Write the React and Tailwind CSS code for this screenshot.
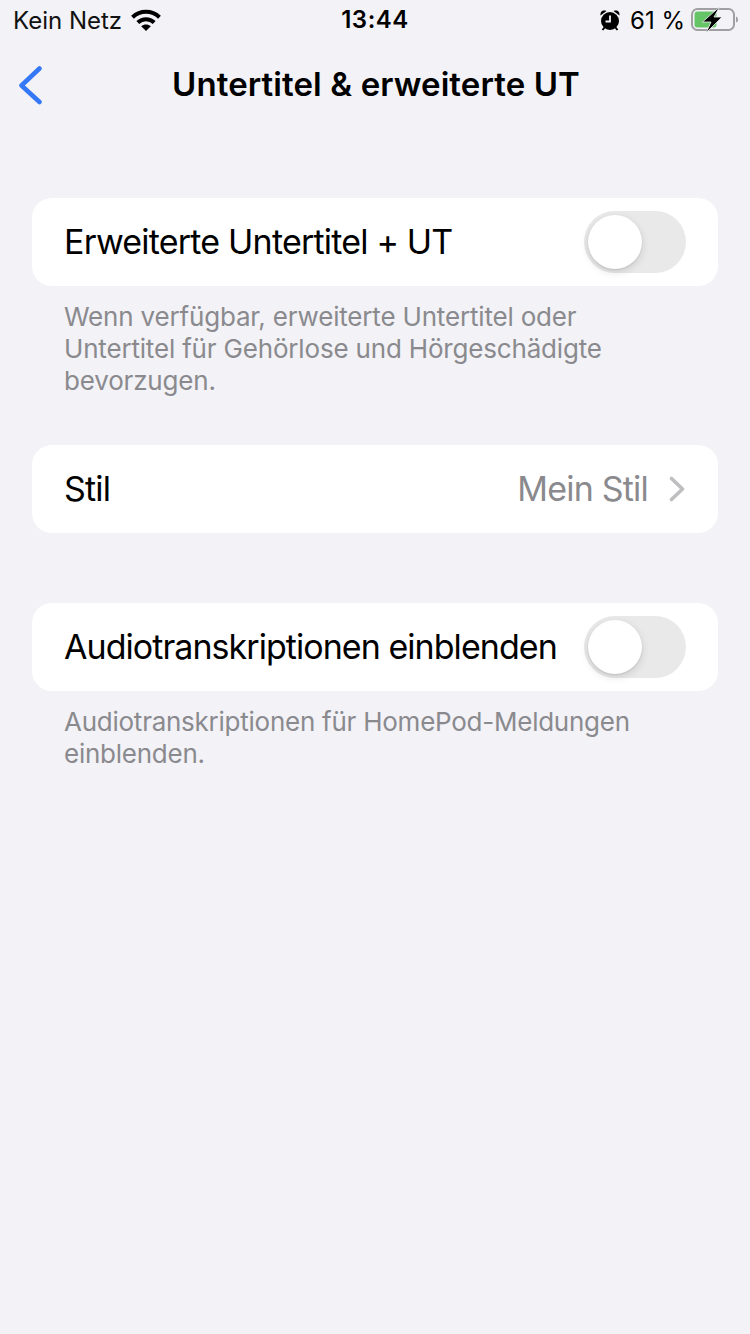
import React from 'react';

const Toggle = () => (
  <div className="relative w-[102px] h-[62px] rounded-full bg-[#e9e9ea] shrink-0">
    <div className="absolute left-[4px] top-[4px] w-[54px] h-[54px] rounded-full bg-white shadow-[0_3px_8px_rgba(0,0,0,0.12),0_1px_2px_rgba(0,0,0,0.1)]" />
  </div>
);

const Wifi = () => (
  <svg width="30" height="22" viewBox="0 0 30 22" fill="none" stroke="#000">
    <path d="M1.500 8.200C9.200 1 20.800 1 28.500 8.200" strokeWidth="4" />
    <path d="M6.800 13.500C11.500 9 18.500 9 23.200 13.500" strokeWidth="4" />
    <path d="M15 22L10.200 17.300C13 14.800 17 14.800 19.800 17.300Z" fill="#000" stroke="none" />
  </svg>
);

const Alarm = () => (
  <svg width="20" height="22" viewBox="0 0 20 22">
    <circle cx="10" cy="12" r="9" fill="#000" />
    <path d="M0.500 6.500C0 2.500 3 0.500 6.500 2ZM19.500 6.500C20 2.500 17 0.500 13.500 2Z" fill="#000" />
    <path d="M2.500 21L4.500 18.500M17.500 21L15.500 18.500" stroke="#000" strokeWidth="2" />
    <path d="M10 6.500V12.500H5.500" stroke="#f2f2f7" strokeWidth="1.800" fill="none" />
  </svg>
);

const Battery = () => (
  <svg width="48" height="26" viewBox="0 0 48 26">
    <rect x="1" y="2" width="42" height="21" rx="5.500" fill="none" stroke="#a0a0a2" strokeWidth="2" />
    <rect x="3.500" y="4.500" width="22" height="16" rx="3" fill="#65c466" />
    <path d="M45 9.500C46.500 10 47 11 47 12.500C47 14 46.500 15 45 15.500Z" fill="#a0a0a2" />
    <path d="M28.500 0L11.500 15H20L15 26L31 10H23Z" fill="#000" stroke="#f2f2f7" strokeWidth="0.800" />
  </svg>
);

const App = () => {
  return (
    <div className="min-h-[1334px] bg-[#f2f2f7] text-black font-['Inter','Liberation_Sans',sans-serif]">
      {/* Status bar */}
      <div className="h-[40px] pl-[13px] pr-[11px] flex items-center justify-between relative text-[24px]">
        <div className="flex items-center gap-[9px]">
          <span className="text-[#111] pt-[2px]">Kein Netz</span>
          <Wifi />
        </div>
        <span className="absolute left-0 right-0 text-center font-semibold tracking-[0.5px]">13:44</span>
        <div className="flex items-center">
          <Alarm />
          <span className="ml-[10px] mr-[6px] pt-[2px]">61 %</span>
          <Battery />
        </div>
      </div>

      {/* Nav bar */}
      <div className="relative h-[90px] flex items-center justify-center">
        <svg className="absolute left-[17px] top-[25px]" width="26" height="40" viewBox="0 0 26 40" fill="none" stroke="#3478f6" strokeWidth="4.500" strokeLinecap="round" strokeLinejoin="round">
          <path d="M22.500 3.500L4.500 20.500L22.500 37" />
        </svg>
        <h1 className="ml-[2px] text-[33px] font-semibold tracking-[0.1px]">Untertitel &amp; erweiterte UT</h1>
      </div>

      <div className="px-[32px] pt-[68px]">
        <div className="h-[88px] rounded-[20px] bg-white pl-[32px] pr-[32px] flex items-center justify-between text-[34px] tracking-[-0.8px]">
          <span className="pb-[1px]">Erweiterte Untertitel + UT</span>
          <Toggle />
        </div>
        <p className="px-[32px] pt-[15px] text-[26px] leading-[32px] tracking-[-0.18px] text-[#8a8a8e]">
          Wenn verfügbar, erweiterte Untertitel oder Untertitel für Gehörlose und Hörgeschädigte bevorzugen.
        </p>

        <div className="mt-[48px] h-[88px] rounded-[20px] bg-white pl-[32px] pr-[33px] flex items-center justify-between text-[34px] tracking-[-0.8px]">
          <span className="pb-[1px]">Stil</span>
          <div className="flex items-center gap-[21px] text-[#8a8a8e]">
            <span className="pb-[1px]">Mein Stil</span>
            <svg width="16" height="26" viewBox="0 0 16 26" fill="none" stroke="#bfbfc2" strokeWidth="3.600" strokeLinecap="round" strokeLinejoin="round">
              <path d="M2.500 2.500L13.500 13L2.500 23.500" />
            </svg>
          </div>
        </div>

        <div className="mt-[70px] h-[88px] rounded-[20px] bg-white pl-[32px] pr-[32px] flex items-center justify-between text-[34px] tracking-[-0.95px]">
          <span className="whitespace-nowrap pb-[1px]">Audiotranskriptionen einblenden</span>
          <Toggle />
        </div>
        <p className="px-[32px] pt-[15px] text-[26px] leading-[32px] tracking-[-0.25px] text-[#8a8a8e]">
          Audiotranskriptionen für HomePod-Meldungen einblenden.
        </p>
      </div>
    </div>
  );
};

export default App;
